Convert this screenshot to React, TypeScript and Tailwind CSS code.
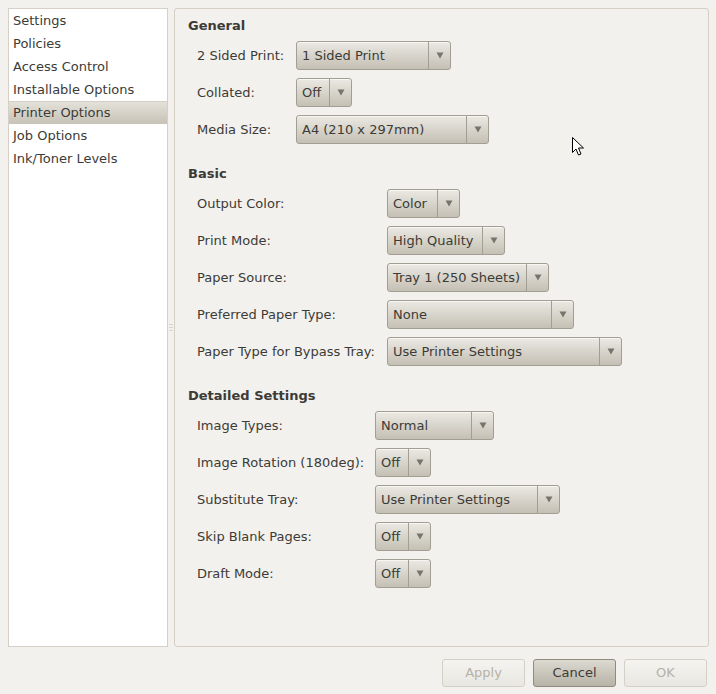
import React from 'react'

const font = { fontFamily: '"DejaVu Sans", Verdana, sans-serif' }

const sections = ['Settings', 'Policies', 'Access Control', 'Installable Options', 'Printer Options', 'Job Options', 'Ink/Toner Levels']

type Row = { label: string; value: string; width: number }

const groups: { title: string; labelWidth: number; rows: Row[] }[] = [
  {
    title: 'General',
    labelWidth: 99,
    rows: [
      { label: '2 Sided Print:', value: '1 Sided Print', width: 155 },
      { label: 'Collated:', value: 'Off', width: 56 },
      { label: 'Media Size:', value: 'A4 (210 x 297mm)', width: 193 },
    ],
  },
  {
    title: 'Basic',
    labelWidth: 190,
    rows: [
      { label: 'Output Color:', value: 'Color', width: 73 },
      { label: 'Print Mode:', value: 'High Quality', width: 118 },
      { label: 'Paper Source:', value: 'Tray 1 (250 Sheets)', width: 162 },
      { label: 'Preferred Paper Type:', value: 'None', width: 187 },
      { label: 'Paper Type for Bypass Tray:', value: 'Use Printer Settings', width: 235 },
    ],
  },
  {
    title: 'Detailed Settings',
    labelWidth: 178,
    rows: [
      { label: 'Image Types:', value: 'Normal', width: 119 },
      { label: 'Image Rotation (180deg):', value: 'Off', width: 56 },
      { label: 'Substitute Tray:', value: 'Use Printer Settings', width: 185 },
      { label: 'Skip Blank Pages:', value: 'Off', width: 56 },
      { label: 'Draft Mode:', value: 'Off', width: 56 },
    ],
  },
]

function Combo({ value, width }: { value: string; width: number }) {
  return (
    <div
      className="flex h-[29px] items-stretch rounded-[3px] border border-[#a29e94] bg-gradient-to-b from-[#ebe9e3] to-[#c4c0b4] shadow-[inset_0_1px_0_rgba(255,255,255,0.6)]"
      style={{ width }}
    >
      <span className="flex flex-1 items-center pl-[5px] text-[13px] text-[#3c3b37]">{value}</span>
      <span className="flex w-[22px] items-center justify-center border-l border-[#a29e94]">
        <svg width="8" height="7" viewBox="0 0 8 7">
          <path d="M0.5 0.5 H7.5 L4 6.5 Z" fill="#77746d" />
        </svg>
      </span>
    </div>
  )
}

function Button({ label, primary }: { label: string; primary?: boolean }) {
  return primary ? (
    <div className="flex h-[28px] w-[83px] items-center justify-center rounded-[3px] border border-[#8f8b80] bg-gradient-to-b from-[#dcd9d1] to-[#b7b3a7] text-[13px] text-[#3c3b37]">
      {label}
    </div>
  ) : (
    <div className="flex h-[28px] w-[83px] items-center justify-center rounded-[3px] border border-[#d4d0c8] bg-gradient-to-b from-[#f5f4f0] to-[#e9e7e1] text-[13px] text-[#b5b1a8]">
      {label}
    </div>
  )
}

export default function App() {
  return (
    <div className="relative flex h-[694px] w-[716px] flex-col bg-[#f3f1ed] text-[#3c3b37]" style={font}>
      <div className="flex flex-1 px-[8px] pt-[8px]">
        {/* list of sections */}
        <div className="w-[160px] border border-[#d5cfc6] bg-white">
          {sections.map((s) => (
            <div
              key={s}
              className={
                s === 'Printer Options'
                  ? 'flex h-[23px] items-center border-t border-[#d3cfc6] bg-gradient-to-b from-[#e4e1da] to-[#c6c2b6] pl-[4px] text-[13px]'
                  : 'flex h-[23px] items-center pl-[4px] text-[13px]'
              }
            >
              {s}
            </div>
          ))}
        </div>

        {/* pane grip */}
        <div className="flex w-[6px] items-center justify-center">
          <div className="flex flex-col gap-[2px]">
            <div className="h-px w-[4px] bg-[#d8d4cc]" />
            <div className="h-px w-[4px] bg-[#d8d4cc]" />
            <div className="h-px w-[4px] bg-[#d8d4cc]" />
          </div>
        </div>

        {/* options */}
        <div className="mr-[-1px] w-[535px] flex-none rounded-[3px] border border-[#d5cfc6] pl-[13px] pt-[7px]">
          {groups.map((g, gi) => (
            <div key={g.title} className={gi > 0 ? 'mt-[20px]' : ''}>
              <div className="h-[19px] text-[13px] font-bold leading-[19px]">{g.title}</div>
              <div className="mt-[6px] flex flex-col gap-[8px] pl-[9px]">
                {g.rows.map((r) => (
                  <div key={r.label} className="flex items-center">
                    <span className="text-[13px]" style={{ width: g.labelWidth }}>
                      {r.label}
                    </span>
                    <Combo value={r.value} width={r.width} />
                  </div>
                ))}
              </div>
            </div>
          ))}
        </div>
      </div>

      {/* dialog buttons */}
      <div className="flex h-[47px] items-start justify-end gap-[8px] pr-[9px] pt-[12px]">
        <Button label="Apply" />
        <Button label="Cancel" primary />
        <Button label="OK" />
      </div>

      {/* mouse pointer */}
      <svg className="absolute left-[572px] top-[137px]" width="14" height="21" viewBox="0 0 14 21">
        <path d="M0.5 0.5 L0.5 15.5 L4 12 L6.5 18 L9 17 L6.5 11 L11.5 11 Z" fill="#fff" stroke="#000" strokeWidth="1" strokeLinejoin="miter" />
      </svg>
    </div>
  )
}
